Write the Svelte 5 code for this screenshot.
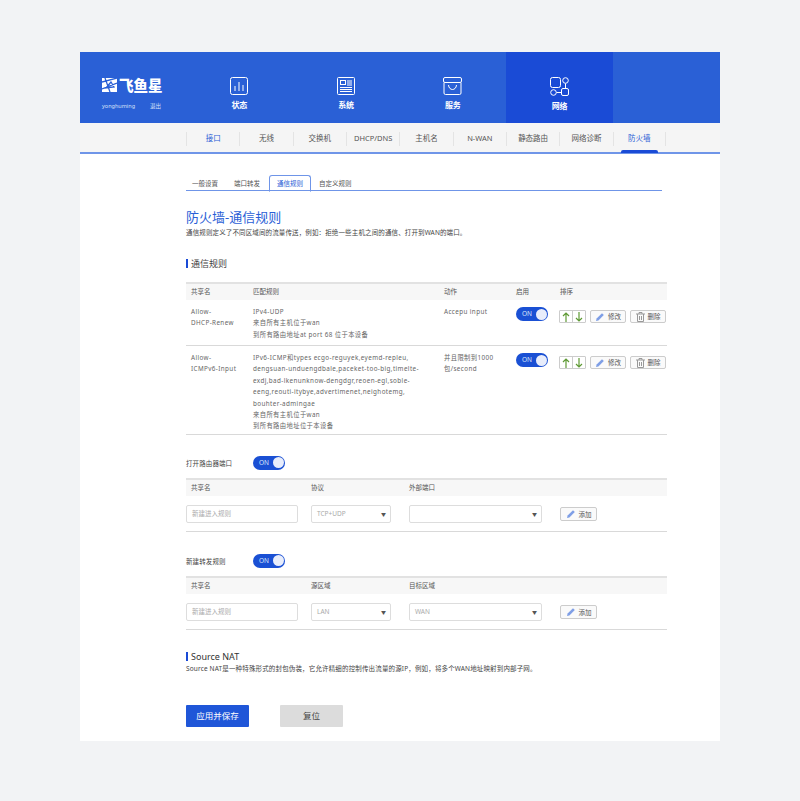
<script>
  const sub = ["接口", "无线", "交换机", "DHCP/DNS", "主机名", "N-WAN", "静态路由", "网络诊断", "防火墙"];
  const tabs = ["一般设置", "端口转发", "通信规则", "自定义规则"];
  const rules = [
    {
      name: ["Allow-", "DHCP-Renew"],
      match: ["IPv4-UDP", "来自所有主机位于wan", "到所有路由地址at port 68 位于本设备"],
      action: ["Accepu input"]
    },
    {
      name: ["Allow-", "ICMPv6-Input"],
      match: [
        "IPv6-ICMP和types ecgo-reguyek,eyemd-repleu,",
        "dengsuan-unduengdbale,paceket-too-big,timelte-",
        "exdj,bad-lkenunknow-dengdgr,reoen-egl,soble-",
        "eeng,reouti-itybye,advertimenet,neighotemg,",
        "bouhter-admingae",
        "来自所有主机位于wan",
        "到所有路由地址位于本设备"
      ],
      action: ["并且限制到1000", "包/second"]
    }
  ];
  const forms = [
    { label: "打开路由器端口", cols: ["共享名", "协议", "外部端口"], sel1: "TCP+UDP", sel2: "" },
    { label: "新建转发规则", cols: ["共享名", "源区域", "目标区域"], sel1: "LAN", sel2: "WAN" }
  ];
</script>

{#snippet toggle()}
  <span class="toggle"><span class="on">ON</span><span class="knob"></span></span>
{/snippet}

{#snippet pencil()}
  <svg width="10" height="10" viewBox="0 0 10 10"><path d="M1 9l.6-2.400L7 1.200 8.800 3 3.400 8.400z" fill="#7f9fe6"/></svg>
{/snippet}

<div class="page">
  <div class="card">
    <header>
      <div class="brand">
        <div class="logo">
          <svg width="15" height="14" viewBox="0 0 15 14">
            <rect width="15" height="14" fill="#fff"/>
            <path d="M0 4L15 0M3 0l5 14M0 11l15-6M9 4l-5 6 8-1z" stroke="#2a60d6" stroke-width="1.300" fill="none"/>
          </svg>
          <b>飞鱼星</b>
        </div>
        <div class="user"><span>yonghuming</span><span>退出</span></div>
      </div>
      <div class="nav">
        <svg width="18" height="18" viewBox="0 0 18 18" fill="none" stroke="#fff">
          <rect x=".5" y=".5" width="17" height="17" rx="2"/>
          <path d="M5 9v5M9 5v9M13 8v6"/>
        </svg>
        <span>状态</span>
      </div>
      <div class="nav">
        <svg width="18" height="18" viewBox="0 0 18 18" fill="none" stroke="#fff">
          <rect x=".5" y=".5" width="17" height="17" rx="1"/>
          <rect x="3.500" y="3.500" width="5" height="4"/>
          <path d="M10 4h5M10 6h5M10 8h5M3 10.500h12M3 12.500h12M3 14.500h12"/>
        </svg>
        <span>系统</span>
      </div>
      <div class="nav">
        <svg width="19" height="18" viewBox="0 0 19 18" fill="none" stroke="#fff">
          <rect x=".5" y=".5" width="18" height="5" rx="1.500"/>
          <path d="M1 5.500v10.500a1.500 1.500 0 0 0 1.500 1.500h14a1.500 1.500 0 0 0 1.500-1.500V5.500M5.500 8c.5 6 7.500 6 8 0"/>
        </svg>
        <span>服务</span>
      </div>
      <div class="nav active">
        <svg width="19" height="19" viewBox="0 0 19 19" fill="none" stroke="#fff">
          <rect x=".5" y=".5" width="10" height="10" rx="2"/>
          <circle cx="15.500" cy="3.500" r="2.800"/>
          <circle cx="3.500" cy="15.500" r="2.800"/>
          <rect x="11.500" y="11.500" width="7" height="7" rx="1.500"/>
          <path d="M15.500 6.500v5M6.500 15.500h5"/>
        </svg>
        <span>网络</span>
      </div>
    </header>

    <nav class="subnav">
      {#each sub as item, i}
        <span class="sub" class:sel={i === 0} class:cur={i === 8}>{item}</span>
      {/each}
    </nav>

    <main>
      <div class="tabs">
        {#each tabs as t, i}
          <span class="tab" class:open={i === 2}>{t}</span>
        {/each}
      </div>

      <h1>防火墙-通信规则</h1>
      <p class="desc">通信规则定义了不同区域间的流量传送，例如：拒绝一些主机之间的通信、打开到WAN的端口。</p>

      <h2 class="mark first">通信规则</h2>

      <div class="thead rules">
        <span>共享名</span><span>匹配规则</span><span>动作</span><span>启用</span><span>排序</span>
      </div>
      {#each rules as r}
        <div class="row rules">
          <div>{#each r.name as l}<div>{l}</div>{/each}</div>
          <div>{#each r.match as l}<div>{l}</div>{/each}</div>
          <div>{#each r.action as l}<div>{l}</div>{/each}</div>
          <div class="cell-toggle">{@render toggle()}</div>
          <div class="ops">
            <span class="arrows">
              <span class="arrow">
                <svg width="8" height="10" viewBox="0 0 8 10" fill="none" stroke="#5f9a35" stroke-width="1.200"><path d="M4 10V1M1 4l3-3 3 3"/></svg>
              </span>
              <span class="arrow">
                <svg width="8" height="10" viewBox="0 0 8 10" fill="none" stroke="#5f9a35" stroke-width="1.200"><path d="M4 0v9M1 6l3 3 3-3"/></svg>
              </span>
            </span>
            <span class="btn">{@render pencil()}修改</span>
            <span class="btn">
              <svg width="9" height="10" viewBox="0 0 9 10" fill="none" stroke="#999"><path d="M0 2h9M3 2V.5h3V2M1.500 2v7.500h6V2M3.500 4v4M5.500 4v4"/></svg>
              删除
            </span>
          </div>
        </div>
      {/each}

      {#each forms as f}
        <div class="switch-line">
          <span class="switch-label">{f.label}</span>
          {@render toggle()}
        </div>
        <div class="thead form-head">
          <span>{f.cols[0]}</span><span>{f.cols[1]}</span><span>{f.cols[2]}</span>
        </div>
        <div class="form-row">
          <span class="input name ph">新建进入规则</span>
          <span class="input sel1 ph">{f.sel1}<i>▼</i></span>
          <span class="input sel2 ph">{f.sel2}<i>▼</i></span>
          <span class="btn add">{@render pencil()}添加</span>
        </div>
      {/each}

      <h2 class="mark nat">Source NAT</h2>
      <p class="desc">Source NAT是一种特殊形式的封包伪装，它允许精细的控制传出流量的源IP，例如，将多个WAN地址映射到内部子网。</p>

      <div class="actions">
        <span class="primary">应用并保存</span>
        <span class="reset">复位</span>
      </div>
    </main>
  </div>
</div>

<style>
  :global(body) {
    background: #f2f3f5;
    font-family: "Noto Sans", "Noto Sans CJK SC", sans-serif;
    color: #555;
  }
  .page {
    padding: 52px 80px 60px;
  }
  .card {
    background: #fff;
    height: 689px;
  }
  header {
    height: 71px;
    background: #2a60d6;
    display: grid;
    grid-template-columns: 106px repeat(4, 106.750px);
    color: #fff;
  }
  .brand {
    padding: 26px 0 0 22px;
  }
  .logo {
    display: flex;
    align-items: center;
    gap: 2px;
    height: 14px;
  }
  .logo b {
    font-size: 14.500px;
    line-height: 14px;
    font-family: "Noto Sans CJK SC", sans-serif;
    font-weight: 900;
  }
  .user {
    display: flex;
    gap: 15px;
    margin-top: 9px;
    font-size: 5.500px;
    line-height: 10px;
    color: #d5e0f8;
  }
  .nav {
    display: flex;
    flex-direction: column;
    align-items: center;
    padding-top: 25px;
    font-size: 8px;
    font-weight: 700;
    line-height: 12px;
  }
  .nav span {
    margin-top: 4px;
  }
  .nav.active {
    background: #1a4bd6;
  }
  .subnav {
    height: 29px;
    background: #f5f5f5;
    border-bottom: 2px solid #6f95e8;
    display: flex;
    padding-left: 106px;
  }
  .sub {
    position: relative;
    width: 53.330px;
    margin-top: 9px;
    height: 14px;
    border-left: 1px solid #e4e4e4;
    box-sizing: border-box;
    text-align: center;
    font-size: 7.500px;
    line-height: 13px;
    color: #555;
    white-space: nowrap;
  }
  .sub:last-child {
    border-right: 1px solid #e4e4e4;
  }
  .sel, .cur {
    color: #2a60d6;
  }
  .cur::after {
    content: "";
    position: absolute;
    left: 7px;
    right: 7px;
    top: 18px;
    height: 3px;
    background: #1a4bd6;
    border-radius: 2px 2px 0 0;
  }
  main {
    width: 481px;
    margin-left: 106px;
    padding-top: 22px;
  }
  .tabs {
    display: flex;
    gap: 16px;
    width: 470px;
    height: 14px;
    border-bottom: 1px solid #6f95e8;
    padding-left: 6px;
  }
  .tab {
    font-size: 6.500px;
    line-height: 15px;
    white-space: nowrap;
    color: #555;
  }
  .tab.open {
    padding: 0 7px;
    margin: -1px -8px -1px -7px;
    height: 15px;
    line-height: 16px;
    border: 1px solid #6f95e8;
    border-bottom: 1px solid #fff;
    border-radius: 3px 3px 0 0;
    color: #2a60d6;
  }
  h1 {
    margin: 17px 0 0;
    font-size: 13px;
    line-height: 18px;
    font-weight: 400;
    color: #2a60d6;
  }
  .desc {
    margin: 1px 0 0;
    font-size: 6.500px;
    line-height: 11px;
    color: #444;
    white-space: nowrap;
    letter-spacing: .13px;
  }
  .mark {
    margin: 0;
    border-left: 2px solid #1a4bd6;
    padding-left: 3px;
    font-size: 9px;
    line-height: 9px;
    font-weight: 400;
    color: #444;
  }
  .first {
    margin-top: 21px;
  }
  .rules {
    display: grid;
    grid-template-columns: 62px 191px 72px 44px 1fr;
    padding-left: 5px;
  }
  .thead {
    height: 18px;
    margin-top: 14px;
    border-top: 2px solid #e2e2e2;
    background: #f7f7f7;
    font-size: 6.500px;
    line-height: 16px;
    color: #555;
    box-sizing: border-box;
  }
  .row {
    padding-top: 6px;
    padding-bottom: 2px;
    border-bottom: 1px solid #d9d9d9;
    font-size: 6.300px;
    line-height: 11.400px;
    color: #666;
    letter-spacing: .4px;
    white-space: nowrap;
    min-height: 46px;
    box-sizing: border-box;
  }
  .cell-toggle {
    padding-top: 1px;
  }
  .toggle {
    display: flex;
    align-items: center;
    justify-content: space-between;
    box-sizing: border-box;
    width: 32px;
    height: 14px;
    padding: 0 1.500px 0 6px;
    border-radius: 7px;
    background: #1a50d4;
    color: #dbe5fb;
    font-size: 6.500px;
    letter-spacing: 0;
  }
  .knob {
    width: 11px;
    height: 11px;
    border-radius: 50%;
    background: #e8edfb;
  }
  .ops {
    display: flex;
    align-items: flex-start;
    padding-top: 4px;
    margin-left: -1px;
    gap: 4px;
  }
  .arrows {
    display: flex;
    width: 27px;
    height: 13px;
    border: 1px solid #ccc;
    box-sizing: border-box;
    border-radius: 1px;
  }
  .arrow {
    flex: 1;
    display: flex;
    align-items: center;
    justify-content: center;
  }
  .arrow + .arrow {
    border-left: 1px solid #ccc;
  }
  .btn {
    display: inline-flex;
    align-items: center;
    justify-content: center;
    gap: 3px;
    width: 36px;
    height: 13px;
    border: 1px solid #ccc;
    border-radius: 2px;
    box-sizing: border-box;
    background: #fafafa;
    font-size: 6.500px;
    letter-spacing: 0;
    color: #555;
  }
  .switch-line {
    display: grid;
    grid-template-columns: 67px auto;
    justify-content: start;
    align-items: center;
    margin-top: 22px;
    height: 14px;
  }
  .row + .switch-line {
    margin-top: 21px;
  }
  .switch-line + .thead {
    margin-top: 8px;
  }
  .switch-label {
    font-size: 6.500px;
    color: #444;
    letter-spacing: .1px;
  }
  .form-head {
    display: grid;
    grid-template-columns: 120px 98px 1fr;
    padding-left: 5px;
  }
  .form-row {
    display: flex;
    align-items: center;
    height: 36px;
    padding-top: 2px;
    box-sizing: border-box;
    border-bottom: 1px solid #d9d9d9;
  }
  .name {
    width: 112px;
  }
  .sel1 {
    width: 80px;
    margin-left: 13px;
  }
  .sel2 {
    width: 133px;
    margin-left: 18px;
  }
  .add {
    width: 37px;
    height: 14px;
    margin-left: 18px;
  }
  .input {
    position: relative;
    display: block;
    box-sizing: border-box;
    height: 18px;
    padding-left: 5px;
    border: 1px solid #ddd;
    border-radius: 2px;
    font-size: 6.500px;
    line-height: 16px;
    color: #aaa;
    background: #fff;
  }
  .input i {
    position: absolute;
    right: 4px;
    top: 0;
    font-style: normal;
    font-size: 5px;
    color: #555;
  }
  .nat {
    margin-top: 22px;
    color: #333;
  }
  .nat + .desc {
    margin-top: 2px;
    letter-spacing: .15px;
  }
  .actions {
    display: flex;
    gap: 31px;
    margin-top: 31px;
  }
  .actions span {
    width: 63px;
    height: 22px;
    line-height: 22px;
    text-align: center;
    font-size: 8.500px;
    border-radius: 1px;
  }
  .primary {
    background: #1f56d8;
    color: #fff;
  }
  .reset {
    background: #dcdcdc;
    color: #444;
  }
</style>
